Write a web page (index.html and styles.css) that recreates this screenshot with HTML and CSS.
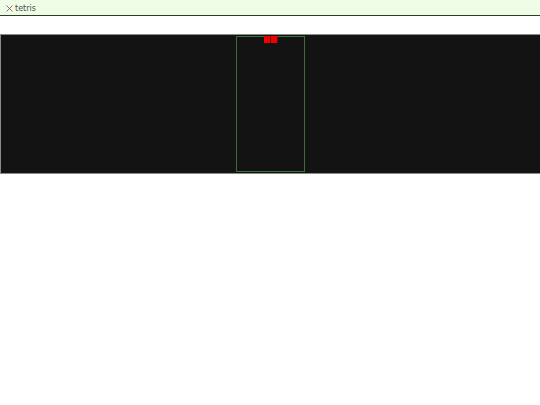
FILE: index.html
```html
<!DOCTYPE html>
<html>
<head>
<meta charset="utf-8">
<link rel="stylesheet" href="styles.css">
</head>
<body>
<div class="tabbar"><svg class="close" width="7" height="7" viewBox="0 0 7 7"><path d="M0.5 0.5L6.5 6.5M6.5 0.5L0.5 6.5" stroke="#555" stroke-width="0.8" fill="none"/></svg><span class="title">tetris</span></div>
<div class="stage">
  <div class="board">
    <div class="cell" style="left:27px"></div>
    <div class="cell" style="left:33.5px"></div>
  </div>
</div>
</body>
</html>
```
FILE: styles.css
```css
html, body { margin: 0; padding: 0; background: #fff; }
body { font-family: "DejaVu Sans", sans-serif; }
.tabbar {
  background: #effde6;
  border-bottom: 1px solid #2f3a2f;
  display: flex;
  align-items: center;
  padding-left: 6px;
  padding-top: 1px;
  box-sizing: border-box;
  height: 16px;
  font-size: 8px;
  color: #4a4a4a;
  gap: 2px;
}
.close { display: block; }
.stage {
  margin-top: 18px;
  height: 137px;
  background: #131313;
  border: 1px solid #8a8a8a;
  border-right: none;
  display: flex;
  justify-content: center;
  padding-top: 1px;
}
.board {
  position: relative;
  width: 67px;
  height: 134px;
  border: 1px solid #3d6b3d;
}
.cell {
  position: absolute;
  top: -1px;
  width: 6px;
  height: 7px;
  background: #ee0000;
  box-shadow: 0.5px 0 0 #b00000;
}
```
